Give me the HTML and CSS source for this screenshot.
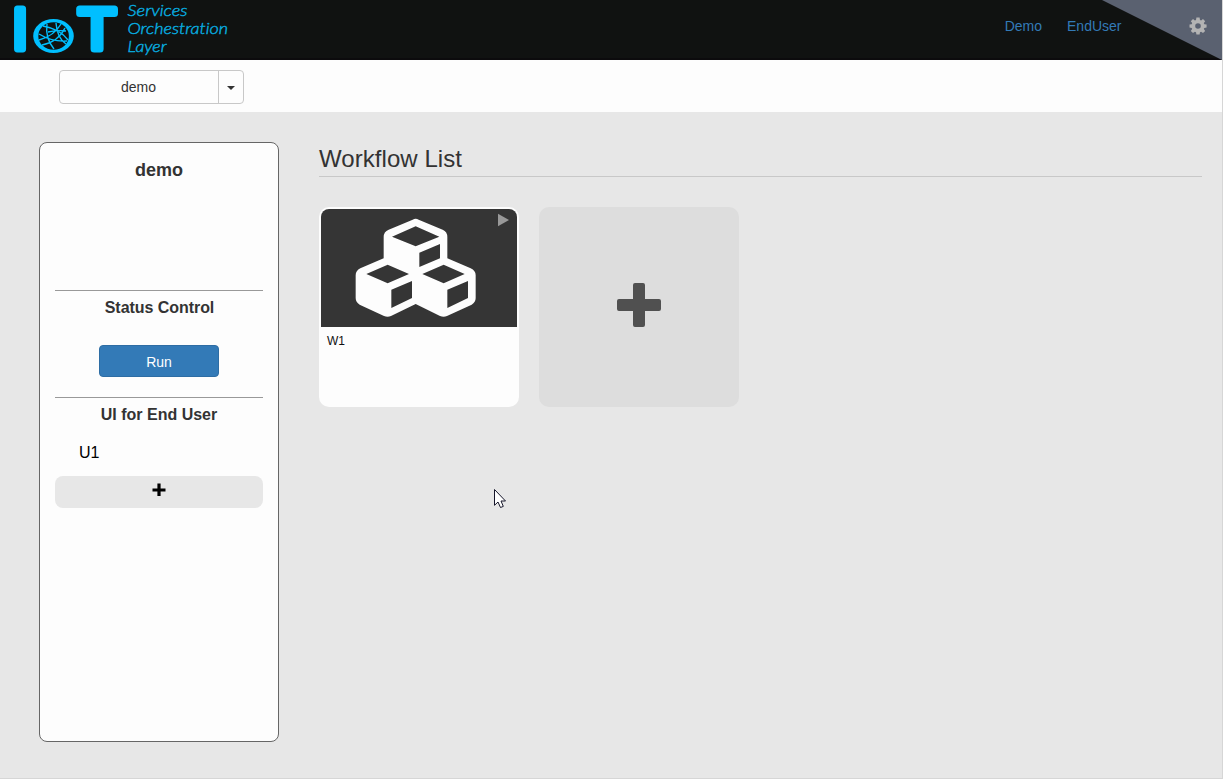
FILE: index.html
```html
<!DOCTYPE html>
<html lang="en">
<head>
<meta charset="utf-8">
<title>IoT Services Orchestration Layer</title>
<link rel="stylesheet" href="styles.css">
</head>
<body>
<div class="app">
  <header class="header">
    <svg class="logo" width="240" height="60" viewBox="0 0 240 60">
      <g class="logo-mark">
        <text transform="translate(12.2 48.5) scale(.97 1)">I</text>
        <text transform="translate(78.4 48.5) scale(1.05 1)">T</text>
      </g>
      <ellipse class="globe-disc" cx="53.5" cy="36" rx="20.3" ry="17"/>
      <ellipse class="globe-hole" cx="53.6" cy="36" rx="15.3" ry="13.8"/>
      <g class="globe-lines">
        <path d="M43 26Q60 29 68 40M47 24Q45 38 54 49M39 34Q52 42 67 41M39 40Q54 36 61 24M42 45Q58 42 65 28M56 23Q57 38 66 44M48 32Q58 30 66 31"/>
      </g>
      <g class="logo-words">
        <text x="127.5" y="16" textLength="60" lengthAdjust="spacingAndGlyphs">Services</text>
        <text x="127.5" y="34" textLength="100.5" lengthAdjust="spacingAndGlyphs">Orchestration</text>
        <text x="127.5" y="52" textLength="39" lengthAdjust="spacingAndGlyphs">Layer</text>
      </g>
    </svg>
    <nav class="nav"><a class="nav-link">Demo</a><a class="nav-link">EndUser</a></nav>
    <div class="corner">
      <svg class="gear" width="18" height="18" viewBox="0 0 18 18"><path fill-rule="evenodd" d="M7.4 0.6h3.2l.4 2.3 1.1.5 1.9-1.4 2.2 2.2-1.4 1.9.5 1.1 2.3.4v2.9l-2.3.4-.5 1.1 1.4 1.9-2.2 2.2-1.9-1.4-1.1.5-.4 2.2H7.4l-.4-2.2-1.1-.5-1.9 1.4-2.2-2.2L3.2 12l-.5-1.1-2.2-.4V7.6l2.2-.4.5-1.1-1.4-1.9L4 2l1.9 1.4 1.1-.5zM9 6.2a2.8 2.8 0 1 0 0 5.6 2.8 2.8 0 0 0 0-5.6z"/></svg>
    </div>
  </header>
  <div class="toolbar">
    <div class="picker"><span class="picker-name">demo</span><span class="picker-toggle"><i class="caret"></i></span></div>
  </div>
  <main class="main">
    <aside class="panel">
      <h2 class="panel-title">demo</h2>
      <section class="status">
        <h3 class="section-title status-title">Status Control</h3>
        <button class="run">Run</button>
      </section>
      <section class="enduser">
        <h3 class="section-title">UI for End User</h3>
        <div class="ui-item">U1</div>
        <div class="add-ui"><svg width="14" height="14" viewBox="0 0 14 14"><path d="M5.4.5h3.2v4.9h4.9v3.2H8.6v4.4H5.4V8.6H.5V5.4h4.9z"/></svg></div>
      </section>
    </aside>
    <section class="workflows">
      <h1 class="heading">Workflow List</h1>
      <div class="cards">
        <article class="card">
          <svg class="cover" width="196" height="118" viewBox="33 237 588 354">
            <path class="cube" d="M308 269Q317 264 326 269L398 299Q412 305 412 321V385L482 415Q497 422 497 436V504Q497 517 485 524L411 558Q401 563 390 558L317 522 243 558Q233 563 222 558L149 524Q137 517 137 504V436Q137 422 151 415L221 385V321Q221 305 236 299Z"/>
            <path class="cube-face" d="M246 320L317 289 388 320 317 349ZM328 368L390 342V385L328 411ZM169 432L233 404 297 432 233 460ZM244 479L306 453V504L244 534ZM337 432L401 404 464 432 401 460ZM412 479L474 453V504L412 534Z"/>
            <path class="play" d="M564 251L597 270 564 289Z"/>
          </svg>
          <div class="card-name">W1</div>
        </article>
        <div class="card-add"><svg width="44" height="44" viewBox="0 0 44 44"><path d="M18 0h8a2 2 0 0 1 2 2v14h14a2 2 0 0 1 2 2v8a2 2 0 0 1-2 2H28v14a2 2 0 0 1-2 2h-8a2 2 0 0 1-2-2V28H2a2 2 0 0 1-2-2v-8a2 2 0 0 1 2-2h14V2a2 2 0 0 1 2-2z"/></svg></div>
      </div>
    </section>
  </main>
  <svg class="pointer" width="13" height="20" viewBox="0 0 13 20"><path d="M.5.5V16.3L4 13l2.5 5.5 2.8-1.1L7 12h4.5z"/></svg>
</div>
</body>
</html>
```
FILE: styles.css
```css
* { box-sizing: border-box; }
body { margin: 0; font: 14px/20px "Liberation Sans", Arial, sans-serif; color: #333; }
.app { position: relative; height: 779px; overflow: hidden; background: #e7e7e7; border-right: 1px solid #d6d6d6; border-bottom: 1px solid #d6d6d6; display: flex; flex-direction: column; }
.header { height: 60px; flex: none; display: flex; background: #101211; box-shadow: inset 0 -2px #0c0b0d; }
.logo { flex: none; overflow: visible; }
.logo-mark { font: 58px "Liberation Sans", Arial, sans-serif; fill: #00bfff; stroke: #00bfff; stroke-width: 7; stroke-linejoin: round; }
.globe-disc { fill: #00bfff; }
.globe-hole { fill: #101211; }
.globe-lines { fill: none; stroke: #00bfff; stroke-width: 1.4; }
.logo-words { font: italic 300 15.5px Lato, sans-serif; font-variant-ligatures: none; fill: #08a9df; stroke: #08a9df; stroke-width: 0.45; }
.nav { margin-left: auto; display: flex; gap: 25px; padding: 16px 0.5px 0 0; }
.nav-link { color: #337ab7; }
.corner { width: 120px; height: 60px; flex: none; margin-left: -20px; display: flex; justify-content: flex-end; padding: 17px 15px 0 0; background: #5a6170; clip-path: polygon(0 0, 100% 0, 100% 100%); }
.gear { fill: #b3b3b3; }
.toolbar { height: 52px; flex: none; background: #fdfdfd; padding: 10px 0 0 59px; }
.picker { width: 185px; height: 34px; display: flex; border: 1px solid #c8c8c8; border-radius: 4px; }
.picker-name { flex: 1; padding-right: 1px; text-align: center; line-height: 33px; }
.picker-toggle { width: 25px; border-left: 1px solid #c8c8c8; display: flex; align-items: center; justify-content: center; }
.caret { border: 4px solid transparent; border-top-color: #333; border-bottom: 0; margin-top: 2px; }
.main { flex: 1; display: flex; gap: 40px; padding: 30px 20px 36px 39px; }
.panel { width: 240px; height: 600px; background: #fdfdfd; border: 1px solid #666; border-radius: 8px; padding: 0 15px; }
.panel-title { margin: 0; height: 147px; padding-top: 17px; font-size: 18px; line-height: 20px; text-align: center; }
.status { height: 107px; border-top: 1px solid #999; }
.section-title { margin: 0; font-size: 16px; line-height: 18px; padding-top: 8px; text-align: center; }
.status-title { letter-spacing: -0.05px; padding-left: 1px; }
.run { display: block; width: 120px; height: 32px; margin: 28px auto 0; padding: 2px 0 0; border: 1px solid #2e6da4; border-radius: 4px; background: #337ab7; color: #fff; font: 14px "Liberation Sans", Arial, sans-serif; }
.enduser { border-top: 1px solid #999; }
.ui-item { padding: 19px 24px 0; color: #000; font-size: 16px; line-height: 20px; }
.add-ui { height: 32px; margin-top: 13px; border-radius: 8px; background: #e7e7e7; display: flex; justify-content: center; padding-top: 7px; }
.workflows { flex: 1; }
.heading { margin: 0; height: 35px; border-bottom: 1px solid #c8c8c8; font-size: 24px; line-height: 34px; font-weight: normal; letter-spacing: 0.06px; }
.cards { display: flex; gap: 20px; padding-top: 30px; }
.card, .card-add { width: 200px; height: 200px; border-radius: 10px; }
.card { background: #fdfdfd; padding: 2px; }
.cover { display: block; background: #353535; border-radius: 8px 8px 0 0; }
.cube { fill: #fdfdfd; }
.cube-face { fill: #353535; }
.play { fill: #999; }
.card-name { padding: 5px 6px; color: #111; font-size: 12px; line-height: 18px; }
.card-add { background: #ddd; display: flex; align-items: center; justify-content: center; fill: #505050; padding-bottom: 4px; }
.pointer { position: absolute; left: 494px; top: 489px; fill: #fff; stroke: #16162a; }
```
